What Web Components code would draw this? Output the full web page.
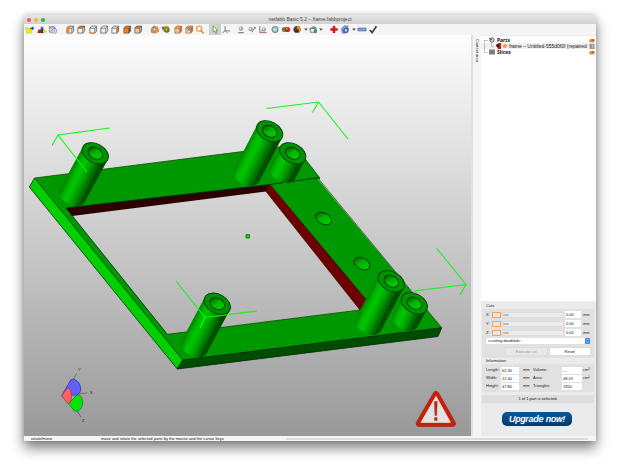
<!DOCTYPE html>
<html lang="en">
<head>
<meta charset="utf-8">
<title>netfabb Basic 5.2 – frame.fabbproject</title>
<style>
html, body { margin: 0; background: #fff; }
body { box-sizing: border-box; min-height: 100vh; padding: 15px 24px 33px; display: flex; font: 4px/6px "Liberation Sans", Arial, sans-serif; color: #222; }
</style>
</head>
<body>
<app-window heading="netfabb Basic 5.2 – frame.fabbproject">
  <tool-bar slot="toolbar"></tool-bar>
  <model-view slot="view"></model-view>
  <side-panel slot="side">
    <part-tree></part-tree>
    <cuts-panel></cuts-panel>
    <info-panel></info-panel>
    <upgrade-box>Upgrade now!</upgrade-box>
  </side-panel>
  <status-line slot="status" mode="rotate/move">move and rotate the selected parts by the mouse and the cursor keys</status-line>
</app-window>
<script>
const define = (name, render) => customElements.define(name, class extends HTMLElement {
  constructor() { super(); this.attachShadow({ mode: 'open' }); }
  connectedCallback() { this.shadowRoot.innerHTML = render(this); }
});

define('app-window', el => `
<style>
:host { flex: 1; min-width: 0; display: flex; flex-direction: column; background: #f5f5f5; border-radius: 2px 2px 0 0; box-shadow: 0 7px 13px rgba(0,0,0,.5), 0 0 5px rgba(0,0,0,.18); }
header { display: grid; grid-template-columns: 1fr auto 1fr; align-items: center; height: 9px; padding: 0 3px; background: linear-gradient(#e6e6e6, #d0d0d0); border-radius: 2px 2px 0 0; }
h1 { margin: 0; font: 5px/9px "Liberation Sans", Arial, sans-serif; color: #484848; }
.lights { display: flex; gap: 3px; }
.lights button { width: 4px; height: 4px; padding: 0; border: 0; border-radius: 50%; background: #f45952; }
.lights button:nth-child(2) { background: #f6b72f; }
.lights button:nth-child(3) { background: #23b93a; }
main { flex: 1; display: grid; grid-template-columns: minmax(0, 1fr) 10px 115px; }
.tab { background: #f4f4f4; border-left: 2px solid #e1e1e1; box-sizing: border-box; writing-mode: vertical-rl; line-height: 8px; padding-top: 4px; color: #222; }
</style>
<header><div class="lights"><button aria-label="Close"></button><button aria-label="Minimize"></button><button aria-label="Zoom"></button></div><h1>${el.getAttribute('heading')}</h1><span></span></header>
<slot name="toolbar"></slot>
<main><slot name="view"></slot><div class="tab">Context area</div><slot name="side"></slot></main>
<slot name="status"></slot>`);

const cube = (front, top, side, edge = '#555') => `<path d="M1.5 3.5h5.5v5.5h-5.5z" fill="${front}"/><path d="M1.5 3.5 3.5 1.2h5.5L7 3.5z" fill="${top}"/><path d="M7 3.5 9 1.2v5.6L7 9z" fill="${side}"/><path d="M1.5 3.5h5.5v5.5h-5.5zM1.5 3.5 3.5 1.2h5.5L7 3.5M9 1.2v5.6L7 9" fill="none" stroke="${edge}" stroke-width=".8"/>`;
const ICONS = {
  open: '<path d="M0 3h3l1 1h4L6.5 9H1z" fill="#f2e61c" stroke="#cdb52a" stroke-width=".4"/><path d="M5 4.500V3h2V1l3 2.500L7 6V4.500z" fill="#2852bd"/>',
  add: '<path d="M5 1 7.300 5H2.700z" fill="#2852bd"/><path d="M1 5h3v4H0z" fill="#c31a12"/><path d="M4 5h2.500v4H4z" fill="#222"/><circle cx="8" cy="7" r="2" fill="#f1d51f"/>',
  report: '<path d="M1 2h6v6H1z" fill="#ddd" stroke="#777" stroke-width=".8"/><path d="M0 1l6 5M3 1l5 3" stroke="#777" stroke-width=".7"/><circle cx="6.500" cy="6.500" r="2.700" fill="#eef3ff" stroke="#5574b4" stroke-width=".7"/><path d="M6.500 5v2h1" stroke="#3556a0" stroke-width=".7" fill="none"/>',
  c1: cube('#fff', '#eee', '#ddd') + '<path d="M1.500 3.500 3.500 1.200h2L4.500 5v4h-3z" fill="#ef8428"/>',
  c2: cube('#f2f2f2', '#ef8428', '#ddd'), c3: cube('#f4f4f4', '#fff', '#ddd') + '<path d="M1.500 9h5.500L8 8" stroke="#ef8428" stroke-width=".9" fill="none"/>',
  c4: cube('#eee', '#fff', '#f4f4f4') + '<path d="M1.500 3.500v5.500" stroke="#ef8428" stroke-width=".8"/>',
  c5: cube('#f5f5f5', '#f5f5f5', '#ef8428'), c6: cube('#ff7d12', '#ef8428', '#8a4a16'), c7: cube('#f7c59a', '#ef8428', '#bbb'),
  v1: '<path d="M1 4 4 1l4 2 1 4-4 2-4-1z" fill="#dfa06c" stroke="#d86d17"/><path d="M3 3l3 1v2L3 7z" fill="#fff" stroke="#555" stroke-width=".7"/>',
  v2: '<circle cx="5" cy="4.500" r="3.700" fill="#ee913c"/><circle cx="6" cy="5.500" r="3" fill="#58841e"/><circle cx="5.500" cy="5" r="1" fill="#c9df83"/><path d="M0 2h3v3H1z" fill="#666"/>',
  v3: cube('#d5c8bb', '#f2a561', '#c7752d', '#b86322'),
  v4: cube('#ddd', '#e5a36c', '#b97945', '#b86322') + '<path d="M3 7 7 3M3 3l4 4" stroke="#666"/>',
  find: '<circle cx="4" cy="4" r="2.900" fill="#fff" stroke="#f18a2d" stroke-width="1.300"/><path d="M6 6.200 9 9.300" stroke="#f18a2d" stroke-width="1.700"/>',
  arrow: '<path d="M3 1v7l1.700-1.500L6 9.500l1.200-.6-1.200-2.700H8z" fill="#f2fae9" stroke="#4c9637" stroke-width=".8"/>',
  axes: '<path d="M4 1v5L1 9M4 6.500h5.500" fill="none" stroke="#914c7c" stroke-width=".9"/><path d="M4 7l3 1.500" stroke="#8d9c82"/><circle cx="4" cy="6.500" r="1.200" fill="#b98aaa"/>',
  t1: '<circle cx="5" cy="4" r="2.600" fill="#aaa"/><circle cx="4.300" cy="3.300" r="1" fill="#eee"/><path d="M2 8.500h6" stroke="#a25586" stroke-width="1.200"/>',
  t2: '<circle cx="3.500" cy="4.500" r="2.600" fill="#aaa"/><circle cx="3" cy="3.800" r="1" fill="#eee"/><path d="M5 8 8 3M7 2.500l1.500 0v2" stroke="#a25586" fill="none"/>',
  t3: '<path d="M1.500 1v7.500H9" stroke="#a25586" fill="none"/><circle cx="6" cy="5" r="2.600" fill="#aaa"/><circle cx="5.500" cy="4.300" r="1" fill="#eee"/><path d="M2 8 5 5" stroke="#777" stroke-width=".7"/>',
  t4: '<circle cx="5" cy="5" r="3.300" fill="#bcd2de" stroke="#558eb5" stroke-width="1.200"/><path d="M3 3.500h4v3H3z" fill="#dfe6cd" stroke="#93a366" stroke-width=".6"/>',
  t5: '<circle cx="3.200" cy="5" r="2.800" fill="#3f9a33"/><circle cx="6.600" cy="5" r="2.900" fill="#d91d21"/><circle cx="6" cy="4" r="1" fill="#f69388"/>',
  t6: '<circle cx="5" cy="5" r="4" fill="#674022"/><path d="M5 1a4 4 0 0 1 0 8z" fill="#e88528"/><path d="M3 5h4v3H3z" fill="#333"/>',
  t7: '<path d="M1 4 6 1l3 2v5H2z" fill="#6f9e54"/><path d="M2 4h5v4H2z" fill="#e8f3ff" stroke="#4f7560" stroke-width=".8"/><path d="M6 5h3v4H6z" fill="#4379b8"/>',
  plus: '<path d="M3.600 1h2.800v2.600H9v2.800H6.400V9H3.600V6.400H1V3.600h2.600z" fill="#d41414"/>',
  gear: '<path d="M1 4 4 1h4l1 4-3 4H2z" fill="#8aa0cc" stroke="#4e67a0" stroke-width=".7"/><circle cx="6" cy="6" r="3" fill="#3f63ac"/><circle cx="6" cy="6" r="1.200" fill="#fff"/>',
  minus: '<path d="M.5 3.500h9v3h-9z" fill="#8ea6d4" stroke="#4865a3" stroke-width=".9"/>',
  check: '<path d="M1.500 5.500 4 8.500 8.800 1.500" fill="none" stroke="#3f3f3f" stroke-width="1.900"/>',
  caret: '<path d="M3 4h4L5 6.500z" fill="#444"/>'
};
define('tool-button', el => `
<style>
:host { display: block; min-width: 0; }
button { display: flex; justify-content: center; align-items: center; width: 100%; height: 11px; padding: 0; border: 0; background: none; }
:host([pressed]) button { background: #cfd1cd; }
svg { flex: none; width: 10px; height: 9px; overflow: visible; }
</style>
<button aria-label="${el.getAttribute('icon')}"><svg viewBox="0 0 10 10">${ICONS[el.getAttribute('icon')]}</svg></button>`);

const group = (size, names) => `<div class="g ${size}">${names.split(' ').map(n => `<tool-button icon="${n}"${n === 'arrow' ? ' pressed' : ''}></tool-button>`).join('')}</div>`;
define('tool-bar', () => `
<style>
:host { display: flex; height: 11px; background: #f5f5f5; }
.g { display: flex; }
.g > * { flex: 1; }
.n1 { width: 10px; } .n2 { width: 23px; } .n3 { width: 35px; } .n5 { width: 57px; } .n6 { width: 68px; } .n7 { width: 80px; } .s { width: 5px; }
.n3, .n7 { margin-right: 5px; }
.n5 { margin-right: 3px; }
.n5 + .n2 { margin-right: 3px; }
.gap { margin-right: 5px; }
</style>
${group('n3', 'open add report')}${group('n7', 'c1 c2 c3 c4 c5 c6 c7')}${group('n5', 'v1 v2 v3 v4 find')}${group('n2', 'arrow axes')}${group('n6', 't1 t2 t3 t4 t5 t6')}${group('s', 'caret')}${group('n1', 't7')}${group('s gap', 'caret')}${group('n2', 'plus gear')}${group('s', 'caret')}${group('n2', 'minus check')}`);

/* Tube: swept ellipse from the rim centre (x, y) along (dx, dy). */
const tube = (x, y, dx, dy) => {
  const a = 14, b = 9.5, th = 28 * Math.PI / 180, c = Math.cos(th), s = Math.sin(th);
  const ux = c * dx + s * dy, uy = c * dy - s * dx, t = Math.atan2(-b * ux, a * uy);
  const px = a * Math.cos(t) * c - b * Math.sin(t) * s, py = a * Math.cos(t) * s + b * Math.sin(t) * c;
  return `<g transform="translate(${x} ${y})">
    <path fill="url(#side)" d="M${px} ${py}L${px + dx} ${py + dy}A${a} ${b} 28 0 1 ${dx - px} ${dy - py}L${-px} ${-py}z"/>
    <g transform="rotate(28)"><ellipse rx="${a}" ry="${b}" fill="#009200" stroke="#003c00" stroke-width=".9"/>
    <ellipse rx="7.700" ry="5.500" fill="url(#bore)" stroke="#003c00" stroke-width=".9"/></g></g>`;
};
const hole = (x, y) => `<ellipse rx="8.500" ry="5.500" transform="translate(${x} ${y}) rotate(28)" fill="url(#bore)" stroke="#002800" stroke-width=".8"/>`;
define('model-view', () => `
<style>
:host { display: block; min-width: 0; background: linear-gradient(#fdfdfd, #999); }
svg { display: block; width: 100%; height: 100%; }
</style>
<svg viewBox="24 35 447 401" role="img" aria-label="frame">
<defs>
<linearGradient id="side" gradientUnits="userSpaceOnUse" x1="-12" y1="-6" x2="12" y2="6">
<stop offset="0" stop-color="#008c00"/><stop offset=".1" stop-color="#00ac00"/><stop offset=".24" stop-color="#00c400"/><stop offset=".4" stop-color="#00c000"/><stop offset=".4" stop-color="#00b000"/><stop offset=".54" stop-color="#00a800"/><stop offset=".54" stop-color="#009600"/><stop offset=".67" stop-color="#008c00"/><stop offset=".67" stop-color="#007600"/><stop offset=".8" stop-color="#006c00"/><stop offset=".8" stop-color="#005600"/><stop offset="1" stop-color="#004800"/></linearGradient>
<linearGradient id="bore" x1="0" y1="0" x2="1" y2=".5"><stop offset="0" stop-color="#005200"/><stop offset=".3" stop-color="#008400"/><stop offset=".55" stop-color="#00b400"/><stop offset="1" stop-color="#00cc00"/></linearGradient>
</defs>
<g stroke-linejoin="round">
<path fill="#009800" fill-rule="evenodd" d="M34.500 178 294 145 306 160 319.500 177.500 318.500 180 441.700 327.700 182.700 360zM66 208 167.300 334.300 360 310 366 301 270 184.500z"/>
<path fill="#009800" d="M66 208 72 216 167.300 334.300 155 330z"/>
<path d="M34.500 178 294 145 306 160 319.500 177.500V180L441.700 327.700M167.300 334.300 360 310" stroke="#004400" stroke-width=".7" fill="none"/>
<path fill="#2c0000" d="M66 208 270 184.500 266 191.500 72 216z"/>
<path fill="#6d0000" stroke="#280000" stroke-width=".6" d="M270 184.500 368 302 360 310 266 191.500z"/>
<path d="M66 208 270 184.500 319.500 177.500" stroke="#003000" stroke-width=".9" fill="none"/>
<path fill="#00d000" stroke="#003000" stroke-width=".8" d="M34.500 178 182.700 360 177.300 369 29.300 187z"/>
<path fill="#004c00" stroke="#002800" stroke-width=".8" d="M182.700 360 441.700 327.700 438 336.500 177.300 369z"/>
<path d="M66 208 167.300 334.300" stroke="#003000" fill="none" stroke-width=".8"/>
</g>
${hole(323.5, 218.5)}${hole(362, 263.5)}
${tube(292.7, 153.3, -10, 19)}${tube(269.7, 131.300, -23, 44)}${tube(95.3, 153.3, -23, 42)}${tube(391.3, 281.3, -23, 43)}${tube(414.3, 303.3, -9, 17)}${tube(217.3, 303.7, -23, 43)}
<path fill="none" stroke="#14f514" stroke-width="1.100" d="M109.500 128 58 135 52 145.500M58 135 87 172M266.500 108.500 318.500 102 348 139M318.500 102 312.500 112.500M436.500 248 466 284.500 414 291M466 284.500 460 295M176 281 205 317.500 257 311M205 317.500 200 328"/>
<path d="M246 234.500h3.500v3.500H246z" fill="#00e000" stroke="#007400" stroke-width=".8"/>
<g stroke-width=".8">
<path d="M73 380 76.500 373.500" stroke="#268026"/><path d="M78 394 87 393" stroke="#e03434"/><path d="M75 408 81 417" stroke="#3a3ae0"/>
<path d="M61.700 395.700 71 379.500C76 378 80.500 383 80.700 389 80.500 392 79.500 394 77 395z" fill="#6262fb" stroke="#3434a8"/>
<path d="M70 402 77 395C81 394 83 399 82.500 404 82 409 78 412 74.500 411L68 403z" fill="#00e40a" stroke="#0a8a0a"/>
<path d="M61.700 395.700 67.500 388C71 388.500 72 394 71 400 70.500 403 69 404 67.500 403z" fill="#ff6262" stroke="#b52d2d"/>
</g>
<g font-family="Liberation Sans, Arial, sans-serif" font-size="4" fill="#222"><text x="78" y="371">Y</text><text x="90" y="394">X</text><text x="82" y="422">Z</text></g>
<path d="M436 394.500 452.500 423.500H419.200z" fill="#c81f05" stroke="#7d5966" stroke-width="7" stroke-linejoin="round"/>
<path d="M436 394.500 452.500 423.500H419.200z" fill="#c81f05" stroke="#c81f05" stroke-width="6" stroke-linejoin="round"/>
<path d="M436 396.500 450.300 422.300H421.200z" fill="#e2e2e2" stroke="#e2e2e2" stroke-linejoin="round"/>
<path d="M434.300 401.500h3l-.6 14h-1.800zM434.500 417.500h2.700v3h-2.700z" fill="#c81f05" stroke="#9d4751" stroke-width=".4"/>
</svg>`);

define('side-panel', () => `
<style>:host { display: flex; flex-direction: column; background: #ebebeb; min-width: 0; }</style><slot></slot>`);

const eye = '<svg class="eye" viewBox="0 0 6 5"><path d="M0 2.500C1 .5 4 0 6 1.500L5 4.500H1z" fill="#e88a2e"/><circle cx="4" cy="2.200" r="1" fill="#777"/></svg>';
define('part-tree', () => `
<style>
:host { flex: 1; display: block; background: #fff; padding-top: 1px; margin-top: 1px; font: 5px/6px "Noto Sans", "DejaVu Sans", sans-serif; color: #111; }
ul { list-style: none; margin: 0; padding: 0; }
li { display: flex; align-items: center; height: 6px; gap: 2px; padding: 0 1px 0 8px; line-height: 6px; white-space: nowrap; }
li.sel { background: #f0f0f0; padding-left: 15px; gap: 0; }
span { flex: 1; padding-left: 1px; font-family: "Liberation Sans", Arial, sans-serif; }
b { flex: 1; }
.ic { width: 6px; height: 6px; flex: none; }
.eye { width: 6px; height: 5px; flex: none; }
.wrap { display: grid; grid-template-columns: minmax(0, 1fr); }
.lines { grid-area: 1 / 1; width: 13px; height: 18px; }
ul { grid-area: 1 / 1; }
</style>
<div class="wrap">
<ul>
<li><svg class="ic" viewBox="0 0 6 6"><path d="M1 2 3 .5l2 1.500v2L3 5.500 1 4z" fill="#ddd" stroke="#444" stroke-width=".8"/><path d="M0 1l3 2" stroke="#444"/></svg><b>Parts</b>${eye}</li>
<li class="sel"><svg class="ic" viewBox="0 0 6 6"><path d="M0 2 3 0h2v6H2z" fill="#cf1710"/><path d="M0 2l3-1.500V4H1z" fill="#222"/></svg><svg class="ic" viewBox="0 0 6 6"><circle cx="3" cy="3" r="2" fill="#f59838"/></svg><span>frame – Untitled-555d0f0f (repaired</span><svg class="eye" viewBox="0 0 6 5"><path d="M1 0h4v5H1z" fill="#bbb" stroke="#777" stroke-width=".7"/><path d="M2 1v3" stroke="#b55" stroke-width=".8"/></svg></li>
<li><svg class="ic" viewBox="0 0 6 6"><path d="M0 .5h6v5H0z" fill="#777"/><path d="M0 2h6M0 4h6" stroke="#999" stroke-width=".4"/></svg><b>Slices</b>${eye}</li>
</ul>
<svg class="lines" viewBox="0 0 13 18"><path d="M2.500 3.500H7M3.500 3.500v12H7M10.500 6v3.500H13" stroke="#aaa" stroke-width=".7" fill="none"/></svg>
</div>`);

const panelCss = `
h2 { margin: 0; padding-left: 4px; font-size: 4px; font-weight: 400; line-height: 6px; color: #222; }
.box { background: #e1e1e1; border-radius: 1px; }
input[type=text] { box-sizing: border-box; width: 100%; min-width: 0; height: 7px; margin: 0; padding: 0 1px; border: 0; background: #fff; font: 4px/7px "Liberation Sans", Arial, sans-serif; color: #111; }
`;
define('cuts-panel', () => `
<style>${panelCss}
:host { display: block; padding: 2px 2px 0 1px; color: #222; }
.box { padding: 1px 4px 3px; }
.row { display: grid; grid-template-columns: 5px 9px minmax(0, 1fr) 16px 8px; column-gap: 1px; align-items: center; height: 9px; }
.row i { font-style: normal; padding-left: 1px; }
.plane { width: 9px; height: 6px; padding: 0; border: 1px solid #f2a25c; background: #eee6dc; }
input[type=range] { appearance: none; width: 100%; min-width: 0; height: 6px; margin: 0; background: #ececec; border: 1px solid #dcdcdc; box-sizing: border-box; border-radius: 1px; }
input[type=range]::-webkit-slider-thumb { appearance: none; width: 6px; height: 2px; background: #bdbdbd; border-radius: 1px; }
.pick { display: grid; margin-top: 1px; }
select { grid-area: 1 / 1; appearance: none; height: 6px; border: 0; border-radius: 2px; background: #fff; padding: 0 2px; font: 4px/6px "Liberation Sans", Arial, sans-serif; color: #111; }
.pick svg { grid-area: 1 / 1; justify-self: end; width: 5px; height: 6px; pointer-events: none; }
.actions { display: grid; grid-template-columns: 1fr 1fr; gap: 3px; margin: 4px 0 0 20px; }
.actions button { height: 7px; padding: 0; border: 0; background: #fff; border-radius: 1px; font: 4px/7px "Liberation Sans", Arial, sans-serif; color: #111; box-shadow: 0 0 1px #aaa; }
.actions button:disabled { background: #e8e8e8; color: #999; }
</style>
<h2>Cuts</h2>
<div class="box">
${['X', 'Y', 'Z'].map(k => `<div class="row"><label for="v${k}">${k}:</label><button class="plane" aria-label="${k} plane"></button><input type="range" value="0" aria-label="${k} position"><input type="text" id="v${k}" value="0.00"><i>mm</i></div>`).join('')}
<div class="pick"><select aria-label="Cutting"><option>&lt;cutting disabled&gt;</option></select><svg viewBox="0 0 5 6"><rect width="5" height="6" rx="1" fill="#2f8df5"/><path d="M1.500 2.300 2.500 1l1 1.300M1.500 3.700 2.500 5l1-1.300" stroke="#fff" stroke-width=".6" fill="none"/></svg></div>
<div class="actions"><button disabled>Execute cut</button><button>Reset</button></div>
</div>`);

define('info-panel', () => `
<style>${panelCss}
:host { display: block; padding: 0 2px 0 1px; color: #222; }
.box { display: grid; grid-template-columns: 15px 18px 14px minmax(0, 1fr) 20px 8px; grid-auto-rows: 8px; align-items: center; padding: 2px 4px; }
i { font-style: normal; padding-left: 4px; }
i.u { padding-left: 1px; }
output { display: block; margin: 3px 0 0; background: #dedede; text-align: center; line-height: 8px; color: #111; }
</style>
<h2>Information</h2>
<div class="box">
<label for="l">Length:</label><input type="text" id="l" value="62.30"><i>mm</i><label for="v">Volume:</label><input type="text" id="v" value="---"><i class="u">cm³</i>
<label for="w">Width:</label><input type="text" id="w" value="12.40"><i>mm</i><label for="a">Area:</label><input type="text" id="a" value="48.19"><i class="u">cm²</i>
<label for="h">Height:</label><input type="text" id="h" value="47.80"><i>mm</i><label for="t">Triangles:</label><input type="text" id="t" value="1850"><i class="u"></i>
</div>
<output>1 of 1 part is selected.</output>`);

define('upgrade-box', () => `
<style>
:host { display: grid; justify-items: center; padding: 9px 3px 10px 0; }
button { width: 70px; height: 14px; padding: 0; border: 0; border-radius: 5px; background: linear-gradient(#07589a, #003a6c); color: #fff; font: italic 9px/14px "Liberation Sans", Arial, sans-serif; text-shadow: 0 0 1px #fff; }
</style>
<button><slot></slot></button>`);

define('status-line', el => `
<style>
:host { display: grid; grid-template-columns: 70px auto minmax(0, 1fr); align-items: center; height: 5px; padding: 0 8px 0 7px; background: #f5f5f5; line-height: 5px; color: #111; }
.bar { height: 2px; margin-left: 62px; background: #dcdcdc; }
span { white-space: nowrap; }
</style>
<span>${el.getAttribute('mode')}</span><span><slot></slot></span><div class="bar"></div>`);
</script>
</body>
</html>
